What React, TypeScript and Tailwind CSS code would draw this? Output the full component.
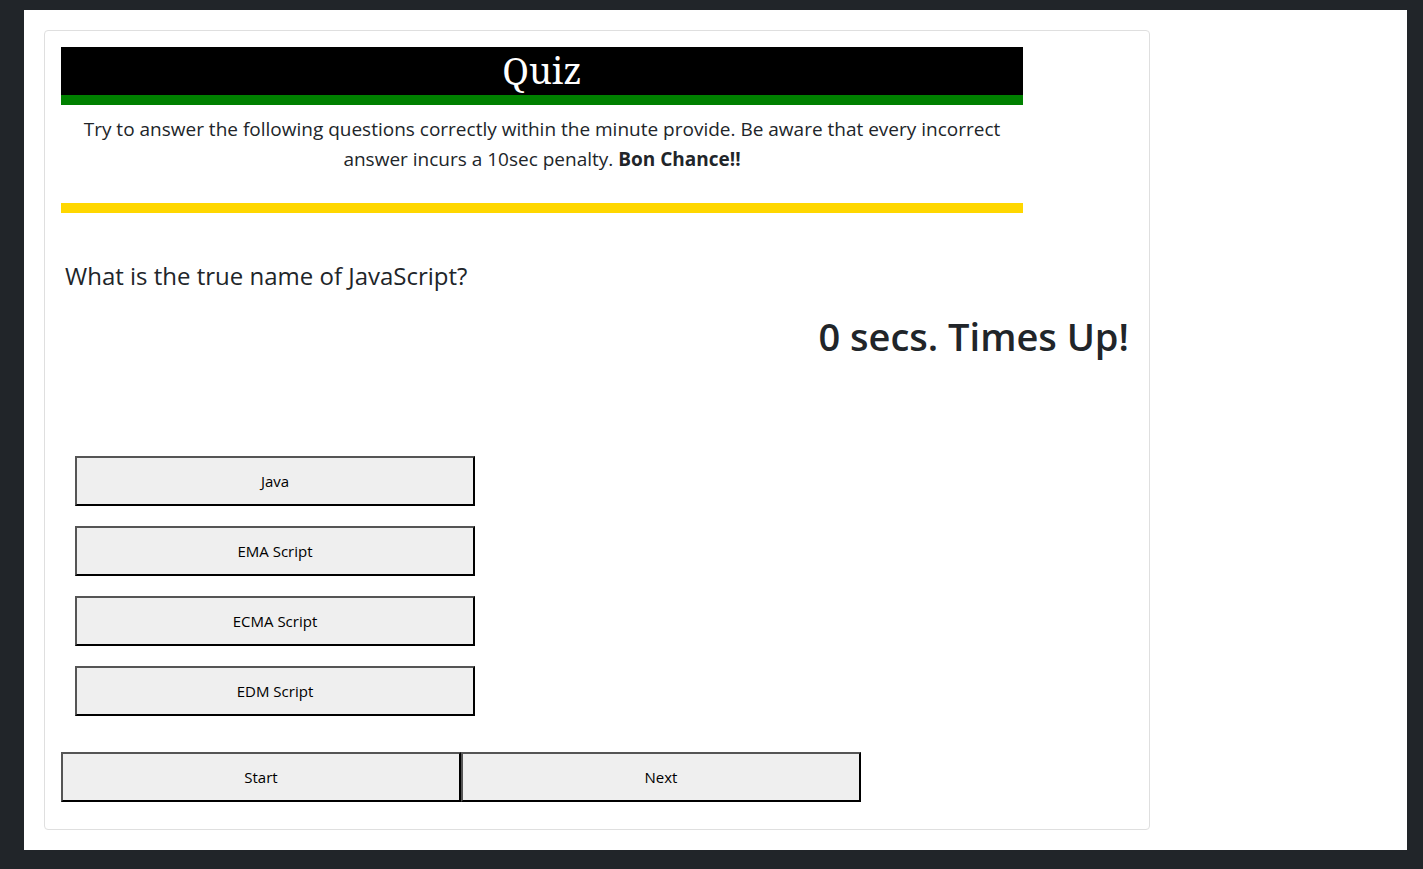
export default function App() {
  const answers = ["Java", "EMA Script", "ECMA Script", "EDM Script"];
  const button =
    "h-[50px] w-[400px] border-2 border-t-[#555] border-l-[#555] border-r-black border-b-black bg-[#efefef] text-center text-[15px] text-black";
  return (
    <div className="min-h-screen bg-[#212529] pt-[10px] pr-4 pb-[19px] pl-6 font-['Open_Sans','Noto_Sans',sans-serif] text-[#212529]">
      <main className="bg-white p-5">
        <section className="w-4/5 min-w-[1106px] rounded border border-[#dfdfdf] px-4 pt-4 pb-[27px]">
          <header className="mr-[110px]">
            <h1 className="border-b-[10px] border-[#008000] bg-black text-center font-['Noto_Serif','DejaVu_Serif',serif] text-4xl leading-[48px] text-white">
              Quiz
            </h1>
            <p className="border-b-[10px] border-[#ffd700] px-4 pt-[9px] pb-[29px] text-center text-[19px] leading-[30px]">
              Try to answer the following questions correctly within the minute provide. Be aware that every incorrect
              answer incurs a 10sec penalty. <b>Bon Chance!!</b>
            </p>
          </header>
          <p className="mt-[43px] pl-1 text-2xl leading-10">What is the true name of JavaScript?</p>
          <h2 className="mt-4 pr-1 text-right text-[38px] leading-[48px] font-semibold">0 secs. Times Up!</h2>
          <div className="mt-24 flex flex-col items-start gap-5 pl-[14px]">
            {answers.map((answer) => (
              <button key={answer} type="button" className={button}>
                {answer}
              </button>
            ))}
          </div>
          <div className="mt-9 flex">
            <button type="button" className={button}>Start</button>
            <button type="button" className={button}>Next</button>
          </div>
        </section>
      </main>
    </div>
  );
}
